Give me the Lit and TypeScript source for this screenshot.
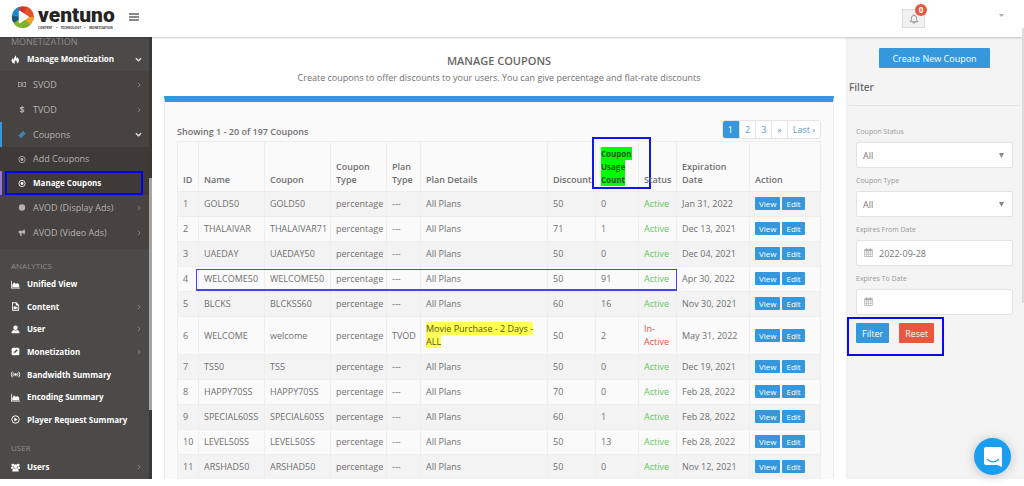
import { LitElement, html, css, svg, nothing, TemplateResult } from "lit";
import { customElement, state } from "lit/decorators.js";
import { classMap } from "lit/directives/class-map.js";

const glyphs: Record<string, TemplateResult> = {
  fire: svg`<path d="M6.5 0.5C9 2.5 7.5 4 9 5.5C9.6 4.8 9.4 4 9.2 3.4C13.5 6 13.5 11.5 9 13.4C9.8 10.9 8.6 9.2 7 7.8C7.1 10 5 10.6 5.9 13.6C0.4 12.4 -0.2 7.6 2.6 5.2C3 6.6 3.6 7 4.3 7.3C3.8 4.6 6.6 3.6 6.5 0.5Z"/>`,
  money: svg`<path fill-rule="evenodd" d="M0 2.5H14V11.5H0ZM1.2 5V9C2 9 2.6 9.6 2.6 10.4H11.4C11.4 9.6 12 9 12.8 9V5C12 5 11.4 4.4 11.4 3.6H2.6C2.6 4.4 2 5 1.2 5ZM7 4.2A2.4 2.8 0 1 1 7 9.8A2.4 2.8 0 1 1 7 4.2ZM6.4 5.6V8.6H7.8V5.6Z"/>`,
  dollar: svg`<path fill="none" stroke="currentColor" stroke-width="1.9" d="M10.4 4.6C9.8 2.6 3.9 2.4 3.9 4.9C3.9 7.4 10.4 6.4 10.4 9.2C10.4 11.8 4.2 11.6 3.4 9.4M7 0.5V13.5"/>`,
  ticket: svg`<path fill-rule="evenodd" d="M9 0.8L10.4 2.2C10 3.4 10.8 4.2 11.9 3.8L13.2 5.1L5.1 13.2L3.8 11.9C4.2 10.8 3.4 10 2.2 10.4L0.8 9Z"/><path d="M8.6 3.8L10.4 5.6L5.5 10.4L3.7 8.6Z" fill="none" stroke="#464341" stroke-width=".7"/>`,
  target: svg`<circle cx="7" cy="7" r="5.5" fill="none" stroke="currentColor" stroke-width="1.5"/><circle cx="7" cy="7" r="2.5"/>`,
  disc: svg`<circle cx="7" cy="7" r="5.6"/>`,
  horn: svg`<path d="M12 1.2V10.6C10.2 9 8.2 8.4 6.2 8.3C5.6 9.8 6.8 10.6 7 12.2C6 13 4.6 13 3.9 12.2C3.6 11 3 9.8 3.4 8.3H2C0.6 8.3 0.6 3.9 2 3.9H6C8.2 3.7 10.4 2.8 12 1.2ZM12.6 4.8C13.8 5 13.8 7 12.6 7.2Z"/>`,
  chart: svg`<path d="M0 1H1.2V12H14V13.2H0ZM2 11.2V7.6L4.8 3.6L7.6 6.4L10.4 4.6L12.8 7.4V11.2Z"/>`,
  file: svg`<path fill-rule="evenodd" d="M1.6 0.5H8.6L12.6 4.5V13.5H1.6ZM2.9 1.8V12.2H11.3V5.6H7.5V1.8ZM4 7H8V8.4L10.2 7V11L8 9.8V11H4Z"/>`,
  user: svg`<circle cx="7" cy="4.2" r="3.4"/><path d="M0.8 12.8C0.8 9.4 2.4 8.4 4.4 7.8C6 8.9 8 8.9 9.6 7.8C11.6 8.4 13.2 9.4 13.2 12.8Z"/>`,
  pen: svg`<rect x="1" y="1" width="12" height="12" rx="2.4"/><path d="M4 10L4.6 7.6L8.8 3.4L10.6 5.2L6.4 9.4Z" fill="#4b4a48"/><path d="M5 8L6 9" stroke="#fff"/>`,
  signal: svg`<circle cx="7" cy="7" r="1.9"/><path fill="none" stroke="currentColor" stroke-width="1.4" d="M4.4 4.2C3 5.6 3 8.4 4.4 9.8M9.6 4.2C11 5.6 11 8.4 9.6 9.8M2.2 2.6C0 5 0 9 2.2 11.4M11.8 2.6C14 5 14 9 11.8 11.4"/>`,
  play: svg`<circle cx="7" cy="7" r="5.8" fill="none" stroke="currentColor" stroke-width="1.5"/><path d="M5.2 4L10.2 7L5.2 10Z"/>`,
  users: svg`<circle cx="2.8" cy="3.2" r="2.2"/><circle cx="11.2" cy="3.2" r="2.2"/><circle cx="7" cy="4.9" r="2.9"/><path d="M0 9C0 6 1 5.2 3.4 5.6C3.8 7.4 4.4 7.6 3 8.8ZM14 9C14 6 13 5.2 10.6 5.6C10.2 7.4 9.6 7.6 11 8.8ZM2 13.4C2 9.4 3.2 8.6 4.8 7.8C6.2 8.9 7.8 8.9 9.2 7.8C10.8 8.6 12 9.4 12 13.4Z"/>`,
  calendar: svg`<path fill-rule="evenodd" d="M0.5 2H3V0.5H5V2H9V0.5H11V2H13.5V13.5H0.5ZM1.5 5.2V7.2H4V5.2ZM4.8 5.2V7.2H6.8V5.2ZM7.5 5.2V7.2H9.5V5.2ZM10.2 5.2V7.2H12.5V5.2ZM1.5 8V10H4V8ZM4.8 8V10H6.8V8ZM7.5 8V10H9.5V8ZM10.2 8V10H12.5V8ZM1.5 10.7V12.5H4V10.7ZM4.8 10.7V12.5H6.8V10.7ZM7.5 10.7V12.5H9.5V10.7ZM10.2 10.7V12.5H12.5V10.7Z"/>`,
  bell: svg`<path fill="none" stroke="currentColor" stroke-width="1.2" d="M1.5 10.8C3.4 9.4 3.4 7.6 3.4 5.8C3.4 3.4 5 2.1 7 2.1C9 2.1 10.6 3.4 10.6 5.8C10.6 7.6 10.6 9.4 12.5 10.8ZM5.6 11.2C5.6 13.3 8.4 13.3 8.4 11.2M7 2.1V0.8"/>`,
};

const icon = (name: string) =>
  html`<svg class="icon" viewBox="0 0 14 14" fill="currentColor" aria-hidden="true">${glyphs[name]}</svg>`;

const chevron = (open = false) => html`<svg class="chev ${open ? "open" : ""}" viewBox="0 0 8 8" aria-hidden="true">
  <path d=${open ? "M1 2.5L4 5.5L7 2.5" : "M2.5 1L5.5 4L2.5 7"} fill="none" stroke="currentColor" stroke-width=${open ? 1.6 : 1} />
</svg>`;

@customElement("side-nav")
export class SideNav extends LitElement {
  static styles = css`
    :host {
      display: block;
      position: relative;
      overflow: hidden;
      background: #4b4a48;
      color: #fff;
      font-size: 9px;
      line-height: 12px;
    }
    nav {
      margin-right: 3px;
    }
    .heading {
      color: #918a89;
      font-size: 8px;
      line-height: 12px;
      padding-left: 11px;
      margin: 0;
      font-weight: 400;
    }
    .heading.first {
      font-size: 9px;
      line-height: 10px;
    }
    .heading.gap {
      margin: 11px 0 1px;
    }
    a {
      display: flex;
      align-items: center;
      color: inherit;
      text-decoration: none;
      padding: 0 7px 0 11px;
      height: 24px;
      font-size: 8px;
      font-weight: 700;
    }
    a .icon {
      width: 9px;
      height: 9px;
      margin-right: 7px;
      flex: none;
    }
    a span {
      flex: 1;
      white-space: nowrap;
    }
    .chev {
      width: 6px;
      height: 6px;
      color: #9a9796;
    }
    .chev.open {
      width: 7px;
      height: 7px;
      color: #ddd;
    }
    .sub {
      background: #464341;
      color: #b5b1b0;
      padding: 1px 0 4px;
    }
    .sub a {
      font-size: 9px;
      font-weight: 400;
      height: 25px;
      padding-left: 18px;
    }
    .sub .icon {
      width: 8px;
    }
    .sub a.current {
      border-left: 2px solid #3598dc;
      padding-left: 16px;
    }
    .sub a.current .icon {
      color: #3598dc;
    }
    .deep {
      background: #3e3a38;
    }
    .deep a {
      height: 24px;
    }
    .deep a.selected {
      border-left: 2px solid #9479d3;
      padding-left: 16px;
      font-size: 8px;
      font-weight: 700;
      color: #fff;
      position: relative;
    }
    .mark {
      position: absolute;
      inset: 0 6px 0 3px;
      border: 2px solid #0000f5;
    }
    .group {
      display: grid;
      grid-auto-rows: 1fr;
      height: 158px;
    }
    .group a {
      height: auto;
    }
    .track {
      position: absolute;
      inset: 0 0 0 auto;
      width: 3px;
      background: #3b3938;
    }
    .thumb {
      margin-top: 141px;
      height: 232px;
      background: #a5a5a5;
    }
  `;
  render() {
    const link = (glyph: string, label: string, arrow: unknown = nothing) =>
      html`<a href="#">${icon(glyph)}<span>${label}</span>${arrow}</a>`;
    return html`
      <nav aria-label="Main">
        <h2 class="heading first">MONETIZATION</h2>
        ${link("fire", "Manage Monetization", chevron(true))}
        <div class="sub">
          ${link("money", "SVOD", chevron())} ${link("dollar", "TVOD", chevron())}
          <a href="#" class="current">${icon("ticket")}<span>Coupons</span>${chevron(true)}</a>
          <div class="deep">
            ${link("target", "Add Coupons")}
            <a href="#" class="selected" aria-current="page">
              ${icon("target")}<span>Manage Coupons</span><i class="mark"></i>
            </a>
          </div>
          ${link("disc", "AVOD (Display Ads)", chevron())} ${link("horn", "AVOD (Video Ads)", chevron())}
        </div>
        <h2 class="heading gap">ANALYTICS</h2>
        <div class="group">
          ${link("chart", "Unified View")} ${link("file", "Content", chevron())} ${link("user", "User", chevron())}
          ${link("pen", "Monetization", chevron())} ${link("signal", "Bandwidth Summary")}
          ${link("chart", "Encoding Summary")} ${link("play", "Player Request Summary")}
        </div>
        <h2 class="heading gap">USER</h2>
        ${link("users", "Users", chevron())}
      </nav>
      <div class="track"><div class="thumb"></div></div>
    `;
  }
}

interface Coupon {
  name: string;
  code: string;
  plan?: string;
  details?: string;
  discount: number;
  used: number;
  active?: boolean;
  expires: string;
  marked?: boolean;
}

const coupons: Coupon[] = [
  { name: "GOLD50", code: "GOLD50", discount: 50, used: 0, expires: "Jan 31, 2022" },
  { name: "THALAIVAR", code: "THALAIVAR71", discount: 71, used: 1, expires: "Dec 13, 2021" },
  { name: "UAEDAY", code: "UAEDAY50", discount: 50, used: 0, expires: "Dec 04, 2021" },
  { name: "WELCOME50", code: "WELCOME50", discount: 50, used: 91, expires: "Apr 30, 2022", marked: true },
  { name: "BLCKS", code: "BLCKSS60", discount: 60, used: 16, expires: "Nov 30, 2021" },
  {
    name: "WELCOME", code: "welcome", plan: "TVOD", details: "Movie Purchase - 2 Days - ALL",
    discount: 50, used: 2, active: false, expires: "May 31, 2022",
  },
  { name: "TS50", code: "TS5", discount: 50, used: 0, expires: "Dec 19, 2021" },
  { name: "HAPPY70SS", code: "HAPPY70SS", discount: 70, used: 0, expires: "Feb 28, 2022" },
  { name: "SPECIAL60SS", code: "SPECIAL60SS", discount: 60, used: 1, expires: "Feb 28, 2022" },
  { name: "LEVEL50SS", code: "LEVEL50SS", discount: 50, used: 13, expires: "Feb 28, 2022" },
  { name: "ARSHAD50", code: "ARSHAD50", discount: 50, used: 0, expires: "Nov 12, 2021" },
];

@customElement("coupon-list")
export class CouponList extends LitElement {
  static styles = css`
    :host {
      display: flex;
      flex-direction: column;
      min-width: 0;
      overflow: hidden;
      padding: 0 12px;
      color: #707070;
      font-size: 9px;
      line-height: 13px;
    }
    h1 {
      margin: 16px 0 0;
      font-size: 11px;
      line-height: 16px;
      font-weight: 600;
      text-align: center;
      color: #666;
    }
    .lead {
      margin: 2px 0 12px;
      text-align: center;
    }
    .panel {
      flex: 1;
      border: 1px solid #e9e9e9;
      border-top: 6px solid #3598dc;
      border-bottom: 0;
      background: #fafafa;
      padding: 18px 12px 0;
    }
    .bar {
      display: flex;
      justify-content: space-between;
      align-items: center;
      height: 19px;
      margin-bottom: 2px;
    }
    .count {
      font-weight: 600;
      padding-top: 3px;
    }
    .pages {
      display: flex;
      border: 1px solid #e4e4e4;
      border-radius: 3px;
      overflow: hidden;
      background: #fff;
    }
    .pages a {
      padding: 2px 5px;
      color: #5b9bd1;
      text-decoration: none;
      border-left: 1px solid #e4e4e4;
    }
    .pages a.on {
      background: #3598dc;
      color: #fff;
      border-left: 0;
      margin: -1px 0 -1px -1px;
      padding: 3px 6px;
    }
    table {
      width: 100%;
      table-layout: fixed;
      border-collapse: collapse;
      border: 1px solid #eee;
    }
    .c0 { width: 21px; }
    .c1, .c2 { width: 66px; }
    .c3 { width: 56px; }
    .c4 { width: 34px; }
    .c6 { width: 48px; }
    .c7 { width: 43px; }
    .c8 { width: 38px; }
    .c9 { width: 73px; }
    .c10 { width: 71px; }
    th,
    td {
      padding: 5px 0 6px 5px;
      text-align: left;
      border: 1px solid #eee;
      white-space: nowrap;
    }
    th {
      font-weight: 600;
      vertical-align: bottom;
      padding: 5px 0 5px 5px;
      position: relative;
      white-space: normal;
    }
    tbody tr:nth-child(odd) {
      background: #f3f3f3;
    }
    tbody tr {
      position: relative;
    }
    td.wrap {
      white-space: normal;
    }
    .ok {
      color: #5fc85a;
    }
    .off {
      color: #e8523f;
    }
    .green {
      background: #0f0;
      color: #175c17;
      font-size: 8px;
      font-weight: 700;
      padding: 1px 0;
    }
    .yellow {
      background: #ff5;
      color: #55551f;
    }
    .head-mark {
      position: absolute;
      inset: -5px -13px 2px -4px;
      border: 2px solid #1414f0;
    }
    .row-mark {
      position: absolute;
      left: 18px;
      right: 144px;
      top: 2px;
      bottom: 1px;
      border: 1px solid #4646e8;
      border-bottom-width: 2px;
    }
    .acts {
      display: flex;
      gap: 2px;
    }
    button {
      font: inherit;
      font-size: 8px;
      line-height: 13px;
      height: 13px;
      margin: 0;
      padding: 0 4px;
      border: 0;
      border-radius: 1px;
      background: #3598dc;
      color: #fff;
    }
  `;
  render() {
    return html`
      <h1>MANAGE COUPONS</h1>
      <p class="lead">
        Create coupons to offer discounts to your users. You can give percentage and flat-rate discounts
      </p>
      <section class="panel">
        <div class="bar">
          <span class="count">Showing 1 - 20 of 197 Coupons</span>
          <nav class="pages" aria-label="Pages">
            ${["1", "2", "3", "»", "Last ›"].map(
              (p, i) => html`<a href="#" class=${classMap({ on: i === 0 })}>${p}</a>`
            )}
          </nav>
        </div>
        <table>
          <colgroup>
            ${Array.from({ length: 11 }, (_, i) => html`<col class="c${i}" />`)}
          </colgroup>
          <thead>
            <tr>
              <th>ID</th>
              <th>Name</th>
              <th>Coupon</th>
              <th>Coupon Type</th>
              <th>Plan Type</th>
              <th>Plan Details</th>
              <th>Discount</th>
              <th><span class="green">Coupon<br />Usage<br />Count</span><i class="head-mark"></i></th>
              <th>Status</th>
              <th>Expiration<br />Date</th>
              <th>Action</th>
            </tr>
          </thead>
          <tbody>
            ${coupons.map(
              (c, i) => html`<tr>
                <td>${i + 1}${c.marked ? html`<i class="row-mark"></i>` : nothing}</td>
                <td>${c.name}</td>
                <td>${c.code}</td>
                <td>percentage</td>
                <td>${c.plan ?? "---"}</td>
                <td class="wrap">${c.details ? html`<span class="yellow">${c.details}</span>` : "All Plans"}</td>
                <td>${c.discount}</td>
                <td>${c.used}</td>
                <td class=${c.active === false ? "off wrap" : "ok"}>${c.active === false ? "In-Active" : "Active"}</td>
                <td>${c.expires}</td>
                <td>
                  <div class="acts"><button type="button">View</button><button type="button">Edit</button></div>
                </td>
              </tr>`
            )}
          </tbody>
        </table>
      </section>
    `;
  }
}

@customElement("coupon-filter")
export class CouponFilter extends LitElement {
  static styles = css`
    :host {
      display: block;
      background: #f4f4f4;
      padding: 11px 4px 0 2px;
      border-left: 1px solid #f0f0f0;
      color: #777;
      font-size: 9px;
      line-height: 13px;
    }
    button {
      font: inherit;
      font-size: 9px;
      color: #fff;
      background: #3598dc;
      border: 0;
      border-radius: 1px;
      height: 20px;
      padding: 0 6px;
      margin: 0;
    }
    .create {
      display: block;
      width: 111px;
      margin: 0 auto;
    }
    h2 {
      margin: 13px 0 0;
      font-size: 10px;
      line-height: 13px;
      font-weight: 600;
      color: #6c6c6c;
      padding-bottom: 11px;
      border-bottom: 1px solid #e5e5e5;
    }
    form {
      padding: 0 7px;
      margin-top: 20px;
    }
    label {
      display: block;
      font-size: 7px;
      line-height: 12px;
      color: #999;
      margin-bottom: 4px;
    }
    .field {
      position: relative;
      height: 26px;
      margin-bottom: 7px;
    }
    select,
    input {
      box-sizing: border-box;
      width: 100%;
      height: 26px;
      margin: 0;
      padding: 0 6px;
      font: inherit;
      font-size: 9px;
      color: #777;
      background: #fff;
      border: 1px solid #e2e2e2;
      border-radius: 2px;
      appearance: none;
      outline: none;
    }
    input {
      padding-left: 22px;
    }
    .arrow {
      position: absolute;
      right: 9px;
      top: 11px;
      width: 5px;
      height: 5px;
      fill: #888;
      pointer-events: none;
    }
    .field .icon {
      position: absolute;
      left: 8px;
      top: 8px;
      width: 9px;
      height: 9px;
      color: #aaa;
    }
    .actions {
      position: relative;
      display: flex;
      gap: 10px;
      margin-top: 8px;
    }
    .actions .reset {
      background: #e9573f;
    }
    .mark {
      position: absolute;
      left: -9px;
      top: -6px;
      width: 93px;
      height: 35px;
      border: 2px solid #0a0af0;
      pointer-events: none;
    }
  `;
  @state() from = "2022-09-28";
  render() {
    const select = (id: string, label: string) => html`
      <label for=${id}>${label}</label>
      <div class="field">
        <select id=${id}><option>All</option></select>
        <svg class="arrow" viewBox="0 0 6 6" aria-hidden="true"><path d="M0 0H6L3 6Z" /></svg>
      </div>
    `;
    const date = (id: string, label: string, value: string) => html`
      <label for=${id}>${label}</label>
      <div class="field"><input id=${id} type="text" .value=${value} />${icon("calendar")}</div>
    `;
    return html`
      <button type="button" class="create">Create New Coupon</button>
      <h2>Filter</h2>
      <form>
        ${select("status", "Coupon Status")} ${select("type", "Coupon Type")}
        ${date("from", "Expires From Date", this.from)} ${date("to", "Expires To Date", "")}
        <div class="actions">
          <button type="button">Filter</button>
          <button type="button" class="reset">Reset</button>
          <i class="mark"></i>
        </div>
      </form>
    `;
  }
}

@customElement("app-root")
export class AppRoot extends LitElement {
  static styles = css`
    :host {
      display: flex;
      flex-direction: column;
      box-sizing: border-box;
      height: 100vh;
      overflow: hidden;
      position: relative;
      padding-bottom: 7px;
      background: #fff;
      font-family: "Open Sans", "Noto Sans", sans-serif;
    }
    header {
      display: flex;
      align-items: center;
      height: 37px;
      flex: none;
      background: #fff;
      box-shadow: 0 1px 2px rgba(0, 0, 0, 0.2);
      position: relative;
      z-index: 1;
      padding: 0 20px 0 12px;
    }
    .logo {
      display: flex;
      align-items: center;
      gap: 4px;
      margin-bottom: 3px;
    }
    .logo svg {
      width: 22px;
      height: 22px;
    }
    .word {
      display: block;
      font-family: "Liberation Sans Narrow", "Roboto", sans-serif;
      font-weight: 900;
      font-size: 21px;
      line-height: 21px;
      color: #262324;
    }
    .tag {
      display: block;
      font-size: 3px;
      line-height: 4px;
      font-weight: 700;
      color: #333;
      white-space: pre;
    }
    .menu {
      display: grid;
      gap: 1px;
      margin-left: 14px;
      margin-bottom: 3px;
      padding: 0;
      border: 0;
      background: none;
    }
    .menu i {
      display: block;
      width: 10px;
      height: 2px;
      background: #888;
    }
    .spacer {
      flex: 1;
    }
    .bell {
      position: relative;
      width: 23px;
      height: 19px;
      padding: 0;
      border: 1px solid #ddd;
      background: #f1f1f1;
      color: #888;
      margin-right: 74px;
      display: grid;
      place-items: center;
    }
    .bell .icon {
      width: 10px;
      height: 10px;
    }
    .badge {
      position: absolute;
      right: -3px;
      top: -6px;
      width: 12px;
      height: 12px;
      border-radius: 50%;
      background: #e2593f;
      color: #fff;
      font: 700 8px/12px "Open Sans", sans-serif;
      text-align: center;
    }
    .caret {
      width: 5px;
      height: 3px;
      fill: #aaa;
      margin-bottom: 7px;
    }
    main {
      flex: 1;
      min-height: 0;
      display: grid;
      grid-template-columns: 152px minmax(0, 1fr) 178px;
      grid-template-rows: minmax(0, 1fr);
    }
    .scroll {
      position: absolute;
      right: 0;
      top: 28px;
      width: 2px;
      height: 275px;
      background: #dcdcdc;
      z-index: 2;
    }
    .chat {
      position: absolute;
      right: 13px;
      bottom: 11px;
      width: 37px;
      height: 37px;
      padding: 0;
      border: 0;
      border-radius: 50%;
      background: #1a9ff0;
      box-shadow: 0 1px 12px rgba(0, 0, 0, 0.2);
      display: grid;
      place-items: center;
      z-index: 2;
    }
    .chat svg {
      width: 18px;
      height: 20px;
    }
  `;
  render() {
    return html`
      <header>
        <div class="logo">
          <svg viewBox="0 0 44 44" aria-hidden="true">
            <path fill="#1e88c9" d="M22 22L13 2A22 22 0 0 0 2 32Z" />
            <path fill="#17577f" d="M22 22L5 36A22 22 0 0 1 0 20Z" />
            <path fill="#d9342b" d="M22 22L12 3A22 22 0 0 1 35 5Z" />
            <path fill="#e2502a" d="M22 22L29 1A22 22 0 0 1 42 30Z" />
            <path fill="#f5a01b" d="M22 22L43 22A22 22 0 0 1 30 42Z" />
            <path fill="#7fb32d" d="M22 22L37 38A22 22 0 0 1 3 34Z" />
            <path fill="#fff" d="M15 11L32 22L15 33Z" stroke="#fff" stroke-width="3" stroke-linejoin="round" />
          </svg>
          <div>
            <span class="word">ventuno</span>
            <span class="tag">CONTENT     •    TECHNOLOGY    •     MONETIZATION</span>
          </div>
        </div>
        <button type="button" class="menu" aria-label="Toggle menu"><i></i><i></i><i></i></button>
        <div class="spacer"></div>
        <button type="button" class="bell" aria-label="Notifications">${icon("bell")}<span class="badge">0</span></button>
        <svg class="caret" viewBox="0 0 10 6" aria-hidden="true"><path d="M0 0H10L5 6Z" /></svg>
      </header>
      <main>
        <side-nav></side-nav>
        <coupon-list></coupon-list>
        <coupon-filter></coupon-filter>
      </main>
      <div class="scroll"></div>
      <button type="button" class="chat" aria-label="Open chat">
        <svg viewBox="0 0 18 20" aria-hidden="true">
          <path fill="#fff" d="M2 0H16Q18 0 18 2V20L13.5 18H2Q0 18 0 16V2Q0 0 2 0Z" />
          <path fill="none" stroke="#1a9ff0" stroke-width="1.3" stroke-linecap="round" d="M3.5 12.5C7 15.5 11 15.5 14.5 12.5" />
        </svg>
      </button>
    `;
  }
}
